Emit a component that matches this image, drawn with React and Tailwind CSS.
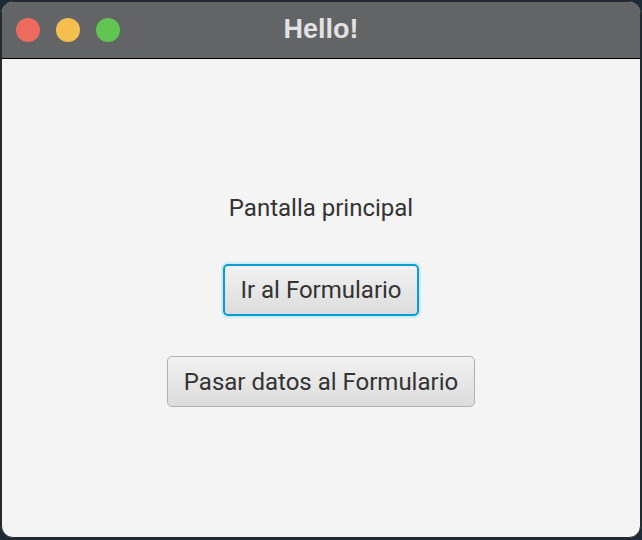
import React from 'react';

const App = () => {
  return (
    <div className="w-[642px] h-[540px] bg-[#1d2b36] pt-[1px] pb-[2px]" style={{ fontFamily: 'Roboto, "Noto Sans", sans-serif' }}>
      <div className="h-full mx-[1px] rounded-[12px] overflow-hidden border border-[#2a2a2a] flex flex-col bg-[#f4f4f4]">
        <div className="relative h-[57px] bg-[#636466] border-b border-black flex items-center shrink-0">
          <div className="flex items-center gap-[16px] pl-[14px] pb-[1px]">
            <span className="w-[24px] h-[24px] rounded-full bg-[#ed6a5e]" />
            <span className="w-[24px] h-[24px] rounded-full bg-[#f5bf4f]" />
            <span className="w-[24px] h-[24px] rounded-full bg-[#61c554]" />
          </div>
          <div
            className="absolute inset-0 flex items-center justify-center text-[27px] font-bold text-[#e2e2e2] pb-[1px]"
            style={{ fontFamily: '"Liberation Sans", Arial, sans-serif' }}
          >
            Hello!
          </div>
        </div>
        <div className="flex-1 flex flex-col items-center pt-[137px]">
          <p className="text-[24px] text-[#333333] leading-none">Pantalla principal</p>
          <button className="mt-[44px] h-[52px] px-[15px] rounded-[5px] border-2 border-[#039ed3] shadow-[0_0_0_2px_#cfe9f5] bg-gradient-to-b from-[#f2f2f2] to-[#dcdcdc] text-[24px] text-[#333333]">
            Ir al Formulario
          </button>
          <button className="mt-[40px] h-[51px] px-[16px] rounded-[5px] border border-[#b1b1b1] bg-gradient-to-b from-[#f2f2f2] to-[#dcdcdc] text-[24px] text-[#333333]">
            Pasar datos al Formulario
          </button>
        </div>
      </div>
    </div>
  );
};

export default App;
